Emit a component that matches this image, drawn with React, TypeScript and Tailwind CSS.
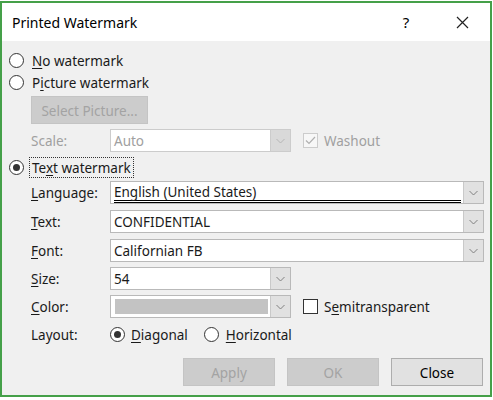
import React from "react";

const font = { fontFamily: '"Noto Sans", "Open Sans", sans-serif' };

function U({ children }: { children: React.ReactNode }) {
  return <span className="underline underline-offset-2 decoration-1">{children}</span>;
}

function Radio({ checked }: { checked?: boolean }) {
  return (
    <span className="w-[15px] h-[15px] rounded-full border border-[#333] bg-white flex items-center justify-center shrink-0">
      {checked && <span className="w-[7px] h-[7px] rounded-full bg-[#333]" />}
    </span>
  );
}

function Chevron({ color = "#6d6d6d" }: { color?: string }) {
  return (
    <svg width="9" height="6" viewBox="0 0 9 6">
      <path d="M0.5 1 L4.5 5 L8.5 1" fill="none" stroke={color} strokeWidth="1" />
    </svg>
  );
}

function Combo({
  width,
  children,
  disabled,
}: {
  width: string;
  children?: React.ReactNode;
  disabled?: boolean;
}) {
  return (
    <div className={`${width} h-[23px] flex border ${disabled ? "border-[#cccccc]" : "border-[#b9b9b9]"} bg-white`}>
      <div className="flex-1 min-w-0 flex items-center pl-[3px] pr-[2px] pt-[2px]">{children}</div>
      <div
        className={`w-[20px] flex items-center justify-center border-l ${
          disabled ? "bg-[#d9d9d9] border-[#cccccc]" : "bg-[#e1e1e1] border-[#c9c9c9]"
        }`}
      >
        <Chevron color={disabled ? "#b5b5b5" : "#808080"} />
      </div>
    </div>
  );
}

function Label({ children, disabled }: { children: React.ReactNode; disabled?: boolean }) {
  return (
    <div className={`w-[79px] shrink-0 pt-[2px] ${disabled ? "text-[#a0a0a0]" : "text-[#1a1a1a]"}`}>{children}</div>
  );
}

export default function App() {
  return (
    <div className="w-[493px] h-[400px] bg-white pt-[1px] text-[13.5px] text-[#1a1a1a]" style={font}>
      <div className="w-[492px] h-[396px] border-2 border-[#45a049] flex flex-col bg-[#f0f0f0]">
        {/* Title bar */}
        <div className="h-[38px] bg-white flex items-center shrink-0">
          <div className="pl-[10px] flex-1 text-[14px] text-black">Printed Watermark</div>
          <div className="w-[20px] text-center text-[15px] mr-[40px] text-black">?</div>
          <svg width="13" height="13" viewBox="0 0 13 13" className="mr-[21px]">
            <path d="M1 1 L12 12 M12 1 L1 12" stroke="#222" strokeWidth="1.2" />
          </svg>
        </div>

        <div className="flex flex-col pl-[7px] pt-[8px]">
          {/* No watermark */}
          <div className="h-[22px] flex items-center gap-[8px]">
            <Radio />
            <span className="pt-[2px]">
              <U>N</U>o watermark
            </span>
          </div>
          {/* Picture watermark */}
          <div className="h-[23px] flex items-center gap-[8px]">
            <Radio />
            <span className="pt-[2px]">
              P<U>i</U>cture watermark
            </span>
          </div>
          {/* Select picture */}
          <div className="mt-[2px] pl-[22px] h-[28px] flex">
            <div className="w-[117px] h-[28px] pt-[2px] bg-[#cccccc] border border-[#c4c4c4] flex items-center justify-center text-[#a3a3a3]">
              Select Picture...
            </div>
          </div>
          {/* Scale */}
          <div className="mt-[5px] pl-[22px] h-[23px] flex items-center">
            <Label disabled>Scale:</Label>
            <Combo width="w-[181px]" disabled>
              <span className="text-[#a0a0a0]">Auto</span>
            </Combo>
            <span className="ml-[12px] w-[15px] h-[15px] border border-[#cccccc] bg-[#f7f7f7] flex items-center justify-center">
              <svg width="11" height="9" viewBox="0 0 11 9">
                <path d="M1 4.5 L4 7.5 L10 1" fill="none" stroke="#b0b0b0" strokeWidth="1.2" />
              </svg>
            </span>
            <span className="ml-[6px] pt-[2px] text-[#a0a0a0]">Washout</span>
          </div>
          {/* Text watermark */}
          <div className="mt-[4px] h-[22px] flex items-center gap-[5px]">
            <Radio checked />
            <span className="border border-dotted border-[#333] px-[2px] pt-[2px] leading-[17px]">
              Te<U>x</U>t watermark
            </span>
          </div>
          {/* Language */}
          <div className="mt-[3px] pl-[22px] h-[23px] flex items-center">
            <Label>
              <U>L</U>anguage:
            </Label>
            <Combo width="w-[374px]">
              <span className="flex-1 border-b-[3px] border-double border-black leading-[16px]">
                English (United States)
              </span>
            </Combo>
          </div>
          {/* Text */}
          <div className="mt-[6px] pl-[22px] h-[23px] flex items-center">
            <Label>
              <U>T</U>ext:
            </Label>
            <Combo width="w-[374px]">CONFIDENTIAL</Combo>
          </div>
          {/* Font */}
          <div className="mt-[6px] pl-[22px] h-[23px] flex items-center">
            <Label>
              <U>F</U>ont:
            </Label>
            <Combo width="w-[374px]">Californian FB</Combo>
          </div>
          {/* Size */}
          <div className="mt-[5px] pl-[22px] h-[23px] flex items-center">
            <Label>
              <U>S</U>ize:
            </Label>
            <Combo width="w-[181px]">54</Combo>
          </div>
          {/* Color */}
          <div className="mt-[5px] pl-[22px] h-[23px] flex items-center">
            <Label>
              <U>C</U>olor:
            </Label>
            <Combo width="w-[181px]">
              <span className="flex-1 h-[15px] bg-[#c3c3c3] ml-[1px] mt-[-2px]" />
            </Combo>
            <span className="ml-[12px] w-[15px] h-[15px] border border-[#333] bg-white" />
            <span className="ml-[6px] pt-[2px]">
              S<U>e</U>mitransparent
            </span>
          </div>
          {/* Layout */}
          <div className="mt-[5px] pl-[22px] h-[22px] flex items-center">
            <Label>Layout:</Label>
            <Radio checked />
            <span className="ml-[6px] pt-[2px]">
              <U>D</U>iagonal
            </span>
            <span className="ml-[16px]">
              <Radio />
            </span>
            <span className="ml-[7px] pt-[2px]">
              <U>H</U>orizontal
            </span>
          </div>
          {/* Buttons */}
          <div className="mt-[13px] h-[28px] flex justify-end pr-[7px] gap-[12px]">
            <div className="w-[92px] h-[28px] pt-[2px] bg-[#cccccc] border border-[#c4c4c4] flex items-center justify-center text-[#a3a3a3]">
              Apply
            </div>
            <div className="w-[92px] h-[28px] pt-[2px] bg-[#cccccc] border border-[#c4c4c4] flex items-center justify-center text-[#a3a3a3]">
              OK
            </div>
            <div className="w-[92px] h-[28px] pt-[2px] bg-[#e1e1e1] border border-[#adadad] flex items-center justify-center text-black">
              Close
            </div>
          </div>
        </div>
      </div>
    </div>
  );
}
